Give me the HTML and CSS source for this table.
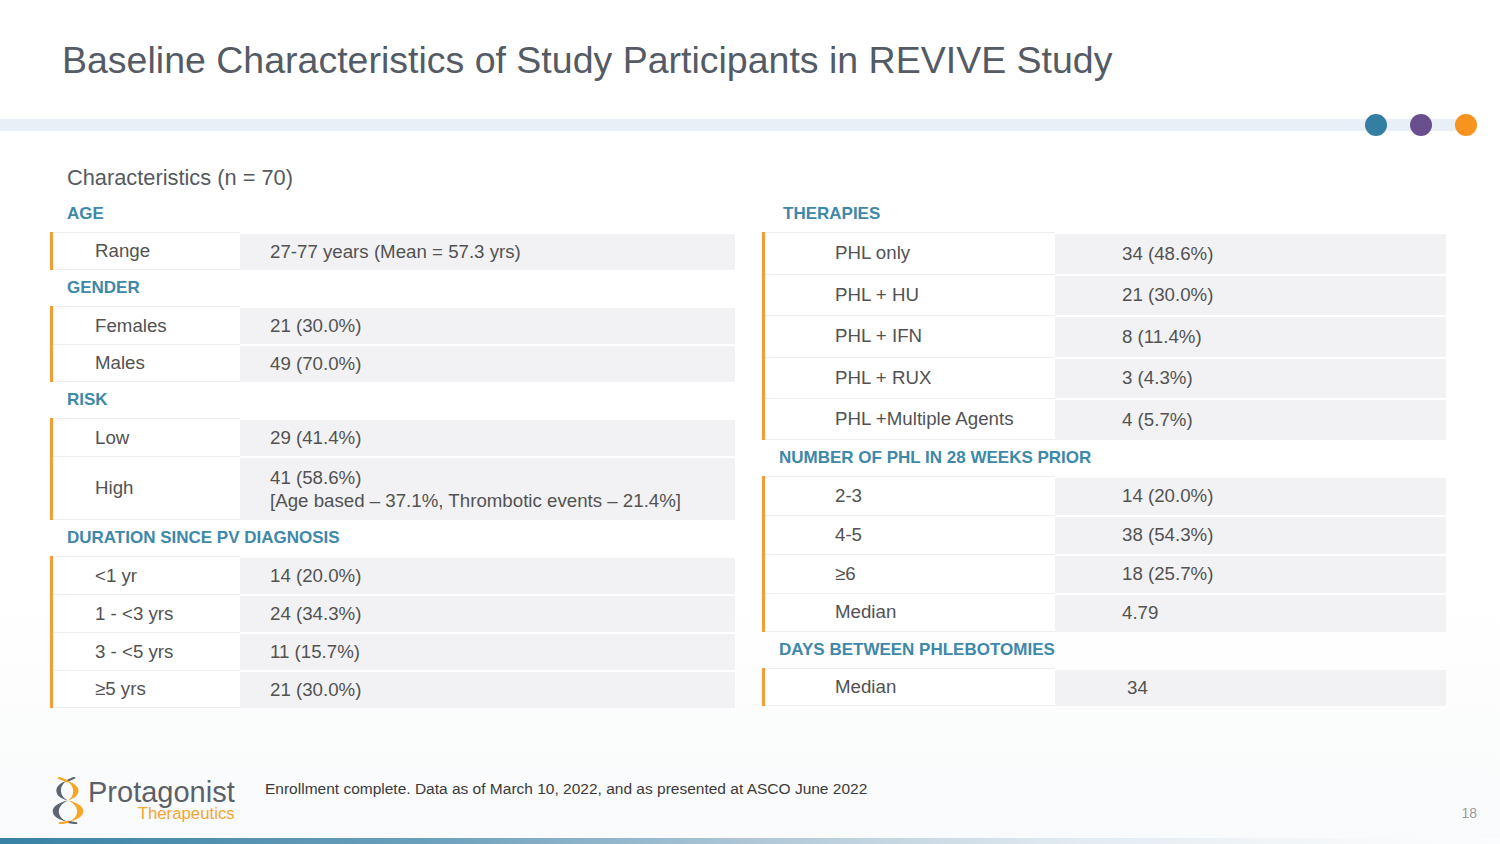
FILE: index.html
```html
<!DOCTYPE html>
<html lang="en">
<head>
<meta charset="utf-8">
<title>Baseline Characteristics of Study Participants in REVIVE Study</title>
<link rel="stylesheet" href="styles.css">
</head>
<body>
<div class="slide">
  <header class="title-row">
    <h1 class="title">Baseline Characteristics of Study Participants in REVIVE Study</h1>
  </header>
  <div class="rule">
    <span class="dot dot-blue"></span>
    <span class="dot dot-purple"></span>
    <span class="dot dot-orange"></span>
  </div>
  <p class="caption">Characteristics (n = 70)</p>
  <div class="columns">
    <section class="col col-left">
      <div class="hdr">AGE</div>
      <div class="group">
        <div class="row"><div class="k">Range</div><div class="v">27-77 years (Mean = 57.3 yrs)</div></div>
      </div>
      <div class="hdr">GENDER</div>
      <div class="group">
        <div class="row"><div class="k">Females</div><div class="v">21 (30.0%)</div></div>
        <div class="row"><div class="k">Males</div><div class="v">49 (70.0%)</div></div>
      </div>
      <div class="hdr">RISK</div>
      <div class="group">
        <div class="row"><div class="k">Low</div><div class="v">29 (41.4%)</div></div>
        <div class="row row-tall"><div class="k">High</div><div class="v"><span>41 (58.6%)</span><span>[Age based – 37.1%, Thrombotic events – 21.4%]</span></div></div>
      </div>
      <div class="hdr">DURATION SINCE PV DIAGNOSIS</div>
      <div class="group">
        <div class="row"><div class="k">&lt;1 yr</div><div class="v">14 (20.0%)</div></div>
        <div class="row"><div class="k">1 - &lt;3 yrs</div><div class="v">24 (34.3%)</div></div>
        <div class="row"><div class="k">3 - &lt;5 yrs</div><div class="v">11 (15.7%)</div></div>
        <div class="row"><div class="k">≥5 yrs</div><div class="v">21 (30.0%)</div></div>
      </div>
    </section>
    <section class="col col-right">
      <div class="hdr hdr-indent">THERAPIES</div>
      <div class="group">
        <div class="row row-therapy"><div class="k">PHL only</div><div class="v">34 (48.6%)</div></div>
        <div class="row row-therapy"><div class="k">PHL + HU</div><div class="v">21 (30.0%)</div></div>
        <div class="row row-therapy"><div class="k">PHL + IFN</div><div class="v">8 (11.4%)</div></div>
        <div class="row row-therapy"><div class="k">PHL + RUX</div><div class="v">3 (4.3%)</div></div>
        <div class="row row-therapy"><div class="k">PHL +Multiple Agents</div><div class="v">4 (5.7%)</div></div>
      </div>
      <div class="hdr">NUMBER OF PHL IN 28 WEEKS PRIOR</div>
      <div class="group">
        <div class="row row-mid"><div class="k">2-3</div><div class="v">14 (20.0%)</div></div>
        <div class="row row-mid"><div class="k">4-5</div><div class="v">38 (54.3%)</div></div>
        <div class="row row-mid"><div class="k">≥6</div><div class="v">18 (25.7%)</div></div>
        <div class="row row-mid"><div class="k">Median</div><div class="v">4.79</div></div>
      </div>
      <div class="hdr">DAYS BETWEEN PHLEBOTOMIES</div>
      <div class="group">
        <div class="row"><div class="k">Median</div><div class="v v-shift">34</div></div>
      </div>
    </section>
  </div>
  <footer class="footer">
    <div class="logo">
      <svg class="logo-mark" width="38" height="47" viewBox="0 0 36 46" aria-hidden="true">
        <path d="M17,4 L24,0.8" stroke="#5d6570" stroke-width="2.2" stroke-linecap="round" fill="none"/>
        <path d="M17,4 L9,0.8" stroke="#f5a623" stroke-width="2.2" stroke-linecap="round" fill="none"/>
        <path d="M17,4 C3,7 3,20 18,23 C9,19 9,8 17,4 Z" fill="#5d6570"/>
        <path d="M17,4 C32,8 32,19 18,23 C25,19 25,9 17,4 Z" fill="#f5a623"/>
        <path d="M18,23 C-2,27 -2,40 18,44 C6,40 6,28 18,23 Z" fill="#5d6570"/>
        <path d="M18,23 C38,27 38,40 18,44 C30,40 30,28 18,23 Z" fill="#f5a623"/>
        <path d="M18,44 L26,45.3" stroke="#5d6570" stroke-width="2.2" stroke-linecap="round" fill="none"/>
        <path d="M18,44 L10,45.3" stroke="#f5a623" stroke-width="2.2" stroke-linecap="round" fill="none"/>
      </svg>
      <div class="logo-text">
        <span class="logo-name">Protagonist</span>
        <span class="logo-sub">Therapeutics</span>
      </div>
    </div>
    <p class="note">Enrollment complete. Data as of March 10, 2022, and as presented at ASCO June 2022</p>
    <span class="page-num">18</span>
  </footer>
  <div class="bottom-bar"></div>
</div>
</body>
</html>
```
FILE: styles.css
```css
* { box-sizing: border-box; }

html, body {
  margin: 0;
  padding: 0;
}

body {
  font-family: "Liberation Sans", Arial, sans-serif;
  background: #ffffff;
}

.slide {
  width: 1500px;
  height: 844px;
  display: flex;
  flex-direction: column;
  background: linear-gradient(to bottom, #ffffff 0%, #ffffff 70%, #f9fafb 100%);
  overflow: hidden;
}

.title-row {
  padding: 38px 0 0 62px;
}

.title {
  margin: 0;
  font-size: 37.5px;
  line-height: 44px;
  font-weight: 400;
  color: #545b64;
}

.rule {
  margin-top: 32px;
  height: 22px;
  display: flex;
  justify-content: flex-end;
  align-items: center;
  gap: 23px;
  padding-right: 23px;
  background: linear-gradient(#e8eff6, #e8eff6) no-repeat 0 5px / 1466px 12px;
}

.dot {
  width: 22px;
  height: 22px;
  border-radius: 50%;
}

.dot-blue { background: #347fa1; }
.dot-purple { background: #6a4f8f; }
.dot-orange { background: #f7931e; }

.caption {
  margin: 25px 0 0 67px;
  font-size: 21.8px;
  line-height: 33px;
  color: #555a60;
}

.columns {
  margin-top: 2px;
  padding-left: 50px;
  display: flex;
  gap: 27px;
}

.col-left { width: 685px; }
.col-right { width: 684px; }

.hdr {
  height: 36px;
  display: flex;
  align-items: center;
  padding-left: 17px;
  font-size: 17px;
  font-weight: 700;
  color: #3e88a9;
}

.hdr-indent { padding-left: 21px; }

.group {
  border-left: 3px solid #f49d37;
}

.row {
  display: grid;
  grid-template-columns: 187px 1fr;
  height: 38px;
  font-size: 18.7px;
  color: #525252;
}

.col-right .row {
  grid-template-columns: 290px 1fr;
}

.row-therapy { height: 41.5px; }
.row-mid { height: 39px; }
.row-tall { height: 64px; }

.k, .v {
  display: flex;
  align-items: center;
}

.k {
  padding-left: 42px;
  background: #ffffff;
  border-top: 1px solid #efefef;
}

.col-right .k { padding-left: 70px; }

.v {
  padding-left: 30px;
  background: #f2f2f4;
  border-top: 2px solid #ffffff;
}

.col-right .v { padding-left: 67px; }
.col-right .v.v-shift { padding-left: 72px; }

.row-tall .v {
  flex-direction: column;
  align-items: flex-start;
  justify-content: center;
  line-height: 23px;
}

.group .row:last-child .k {
  border-bottom: 1px solid #efefef;
}

.footer {
  margin-top: auto;
  height: 60px;
  display: flex;
  align-items: flex-start;
  padding-left: 49px;
}

.logo {
  display: flex;
  align-items: flex-start;
  width: 186px;
  margin-top: -1px;
}

.logo-mark {
  flex: none;
  display: block;
}

.logo-text {
  display: flex;
  flex-direction: column;
  align-items: flex-end;
  margin-left: 1px;
  margin-top: 2px;
}

.logo-name {
  font-size: 29px;
  line-height: 26px;
  color: #5b6168;
}

.logo-sub {
  margin-top: 1px;
  font-size: 16.8px;
  line-height: 16px;
  color: #f2a531;
}

.note {
  margin: 2px 0 0 30px;
  font-size: 15.5px;
  line-height: 18px;
  color: #3a3a3a;
}

.page-num {
  margin: 27px 23px 0 auto;
  font-size: 14px;
  line-height: 16px;
  color: #9a9a9a;
}

.bottom-bar {
  flex: none;
  height: 6px;
  background: linear-gradient(90deg, #3882a5 0%, #6a9fbb 28%, #b3cad9 52%, #e3ebf1 72%, #f6f8fa 90%, #fbfcfd 100%);
}
```
